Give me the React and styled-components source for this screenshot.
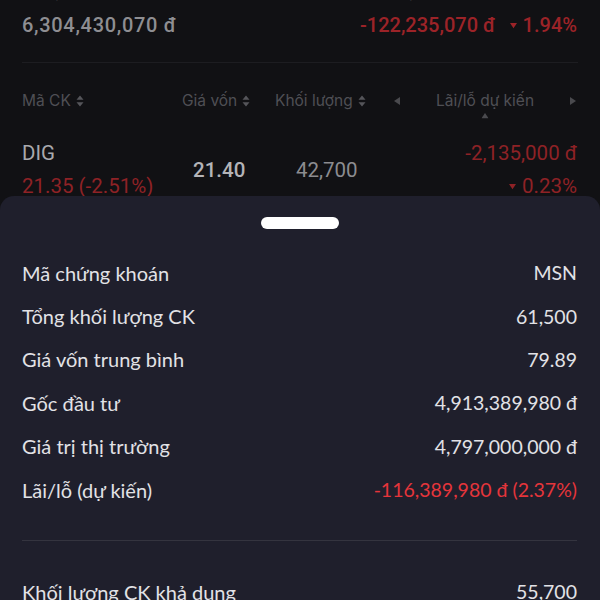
import React from "react";
import styled, { createGlobalStyle } from "styled-components";

const Global = createGlobalStyle`
  html, body { margin: 0; padding: 0; background: #111114; }
  #root { width: 600px; height: 600px; }
  * { box-sizing: border-box; }
`;

const Screen = styled.div`
  position: relative;
  width: 600px;
  height: 600px;
  overflow: hidden;
  background: #111114;
  font-family: Roboto, "Noto Sans", sans-serif;
`;

const Summary = styled.div`
  display: grid;
  grid-template-columns: 338px 1fr;
  padding: 0 23px 0 22px;
  margin-top: -17px;
`;

const SumCol = styled.div`
  display: flex;
  flex-direction: column;
  gap: 10px;
`;

const SumLabel = styled.div`
  font-size: 14px;
  line-height: 20px;
  color: #4a4a4e;
`;

const SumValue = styled.div`
  display: flex;
  justify-content: ${(p) => (p.$right ? "space-between" : "flex-start")};
  font-size: 20px;
  line-height: 24px;
  font-weight: 500;
  letter-spacing: ${(p) => (p.$red ? "0" : "0.7px")};
  color: ${(p) => (p.$red ? "#9c2328" : "#8e8e92")};
`;

const Divider = styled.div`
  flex-shrink: 0;
  height: 1px;
  margin: ${(p) => p.$m};
  background: ${(p) => p.$c};
`;

const HeadRow = styled.div`
  display: grid;
  grid-template-columns: 160px 93px 118px 1fr;
  align-items: center;
  padding: 0 23px 0 22px;
  margin-top: 28px;
  font-family: Inter, "Noto Sans", sans-serif;
  font-size: 15.5px;
  color: #4f4f54;
`;

const HeadCell = styled.div`
  display: flex;
  align-items: center;
  gap: 5px;
`;

const PagerCell = styled.div`
  position: relative;
  display: flex;
  align-items: center;
  justify-content: space-between;
`;

const UpMark = styled.span`
  position: absolute;
  left: 50%;
  top: 21px;
  transform: translateX(-50%);
  display: flex;
`;

const DataRow = styled.div`
  display: grid;
  grid-template-columns: 171px 103px 1fr 1fr;
  align-items: center;
  padding: 0 23px 0 22px;
  margin-top: 31px;
`;

const Stack = styled.div`
  display: flex;
  flex-direction: column;
  align-items: ${(p) => (p.$right ? "flex-end" : "flex-start")};
  gap: 9px;
`;

const Txt = styled.span`
  display: flex;
  align-items: center;
  gap: 6px;
  font-size: ${(p) => p.$fs || 20.5}px;
  line-height: 24px;
  font-weight: ${(p) => p.$w || 400};
  color: ${(p) => p.$c};
`;

const Sheet = styled.div`
  position: absolute;
  left: 0;
  right: 0;
  top: 196px;
  bottom: 0;
  background: #1f1f2c;
  border-radius: 14px 14px 0 0;
  padding: 21px 23px 0 22px;
  display: flex;
  flex-direction: column;
  font-family: Lato, "Noto Sans", sans-serif;
`;

const Handle = styled.div`
  flex-shrink: 0;
  align-self: center;
  width: 78px;
  height: 12px;
  border-radius: 6px;
  background: #ffffff;
  margin-bottom: 22px;
`;

const InfoRow = styled.div`
  flex-shrink: 0;
  display: flex;
  justify-content: space-between;
  align-items: center;
  height: 43.4px;
  font-size: 20px;
  color: #e2e2e6;
`;

const InfoValue = styled.span`
  font-size: 19.5px;
  color: ${(p) => (p.$red ? "#e5353b" : "#e2e2e6")};
`;

const Sort = ({ c = "#55555a" }) => (
  <svg width="8" height="12" viewBox="0 0 8 12">
    <path d="M4 0.5 L7.5 4.8 H0.5 Z M4 11.5 L7.5 7.2 H0.5 Z" fill={c} />
  </svg>
);

const Tri = ({ dir, c, s = 8 }) => {
  const d = {
    left: "M1 4 L7 0 V8 Z",
    right: "M7 4 L1 0 V8 Z",
    up: "M4 1 L8 7 H0 Z",
    down: "M4 7 L8 1 H0 Z",
  }[dir];
  return (
    <svg width={s} height={s} viewBox="0 0 8 8">
      <path d={d} fill={c} />
    </svg>
  );
};

const rows = [
  ["Mã chứng khoán", "MSN"],
  ["Tổng khối lượng CK", "61,500"],
  ["Giá vốn trung bình", "79.89"],
  ["Gốc đầu tư", "4,913,389,980 đ"],
  ["Giá trị thị trường", "4,797,000,000 đ"],
  ["Lãi/lỗ (dự kiến)", "-116,389,980 đ (2.37%)", true],
];

export default function App() {
  return (
    <>
      <Global />
      <Screen>
        <Summary>
          <SumCol>
            <SumLabel>Giá trị vốn</SumLabel>
            <SumValue>6,304,430,070 đ</SumValue>
          </SumCol>
          <SumCol>
            <SumLabel>Lãi/lỗ dự kiến</SumLabel>
            <SumValue $red $right>
              <span>-122,235,070 đ</span>
              <Txt $fs={20} $w={500} $c="#9c2328">
                <Tri dir="down" c="#9c2328" s={7} />
                1.94%
              </Txt>
            </SumValue>
          </SumCol>
        </Summary>
        <Divider $m="25px 22px 0 22px" $c="#1d1d21" />
        <HeadRow>
          <HeadCell>
            Mã CK <Sort />
          </HeadCell>
          <HeadCell>
            Giá vốn <Sort />
          </HeadCell>
          <HeadCell>
            Khối lượng <Sort />
          </HeadCell>
          <PagerCell>
            <Tri dir="left" c="#4a4a4e" />
            <span>Lãi/lỗ dự kiến</span>
            <Tri dir="right" c="#4a4a4e" />
            <UpMark>
              <Tri dir="up" c="#4a4a4e" s={7} />
            </UpMark>
          </PagerCell>
        </HeadRow>
        <DataRow>
          <Stack>
            <Txt $c="#a9a9ad">DIG</Txt>
            <Txt $c="#8e2226">21.35 (-2.51%)</Txt>
          </Stack>
          <Txt $w={500} $c="#b4b4b8">21.40</Txt>
          <Txt $c="#8c8c90">42,700</Txt>
          <Stack $right>
            <Txt $c="#8e2226">-2,135,000 đ</Txt>
            <Txt $c="#8e2226">
              <Tri dir="down" c="#8e2226" s={7} />
              0.23%
            </Txt>
          </Stack>
        </DataRow>
        <Sheet>
          <Handle />
          {rows.map(([l, v, red]) => (
            <InfoRow key={l}>
              <span>{l}</span>
              <InfoValue $red={red}>{v}</InfoValue>
            </InfoRow>
          ))}
          <Divider $m="28.5px 0 29px 0" $c="#34343f" />
          <InfoRow>
            <span>Khối lượng CK khả dụng</span>
            <InfoValue>55,700</InfoValue>
          </InfoRow>
        </Sheet>
      </Screen>
    </>
  );
}
